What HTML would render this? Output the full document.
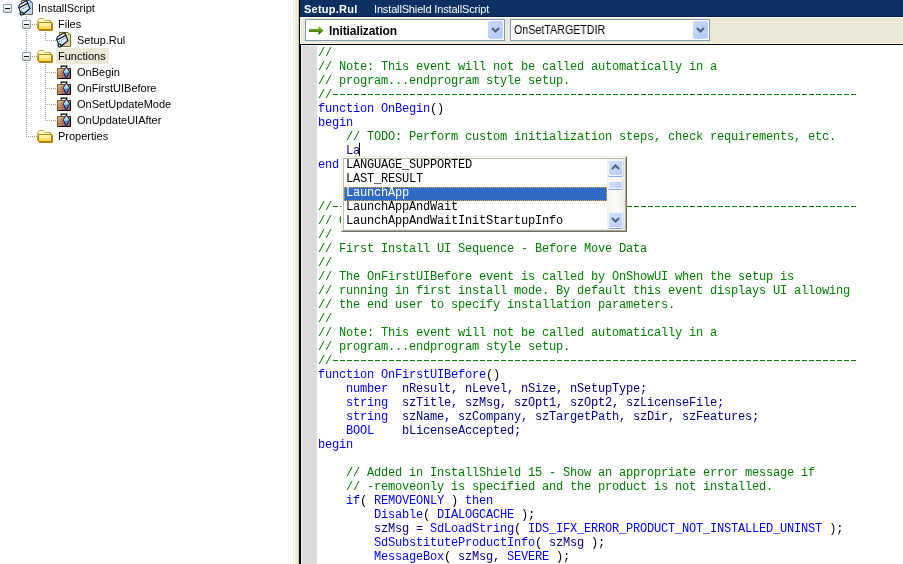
<!DOCTYPE html>
<html><head><meta charset="utf-8">
<style>
*{margin:0;padding:0;box-sizing:border-box}
html,body{width:903px;height:564px;overflow:hidden;background:#fff}
body{position:relative;font-family:"Liberation Sans",sans-serif}
#code,.li,.tl,#title span,.combo span{will-change:transform}
.abs{position:absolute}
/* tree */
.tl{position:absolute;font-size:11px;line-height:16px;color:#000;white-space:nowrap}
.vd{position:absolute;width:1px;background:repeating-linear-gradient(to bottom,#a5a39a 0 1px,transparent 1px 2px)}
.hd{position:absolute;height:1px;background:repeating-linear-gradient(to right,#a5a39a 0 1px,transparent 1px 2px)}
.exp{position:absolute;width:9px;height:9px;border:1px solid #7b9ebd;border-radius:1px;background:linear-gradient(#fff,#f4f2ea 50%,#d6d0bd)}
.exp:after{content:"";position:absolute;left:1px;top:3px;width:5px;height:1px;background:#000}
/* splitter */
/* title */
#title{left:300px;top:0;width:603px;height:17px;background:#0d3063;border-bottom:1px solid #08244e;color:#fff;font-size:11px;line-height:16px;white-space:nowrap}
#toolbar{left:300px;top:17px;width:603px;height:27px;background:#ece9d8;border-top:1px solid #fffcf2;border-left:1px solid #fbf9f0;border-bottom:1px solid #f8f6ec}
.combo{position:absolute;top:19px;width:205px;height:22px;border:1px solid #7f9db9;background:#fff;font-size:11px;white-space:nowrap}
.dbtn{position:absolute;width:15px;height:18px;border-radius:2px;background:linear-gradient(135deg,#cad8fd,#b3c9f7);border:1px solid #c3d3fd}
#editor{left:300px;top:44px;width:603px;height:520px;border-top:1px solid #000;border-left:1px solid #000;background:#fff}
#gutter{left:301px;top:45px;width:16px;height:519px;background:#dcdcdc;border-top:1px solid #f4f4f4;border-left:1px solid #f4f4f4}
#code{left:318px;top:46px;font-family:"Liberation Mono",monospace;font-size:12px;letter-spacing:-0.2px;line-height:14px;white-space:pre;color:#000}
.c{color:#008000}
.d{display:inline-block;vertical-align:top;width:525px;height:14px;background:linear-gradient(to right,transparent 1px,#008000 1px,#008000 6px,transparent 6px) 0 6px/7px 1px repeat-x}.k{color:#0000ff}.i{color:#000080}
/* popup */
.sb{position:absolute;width:15px;border:1px solid #f6f8ff;border-radius:2px;background:linear-gradient(135deg,#d4e0fe,#b8ccf8);box-shadow:0 1px 0 #86a4e4,1px 0 0 #c8d6f4}
#pop{left:341px;top:156px;width:286px;height:76px;border-top:1px solid #f1efe2;border-left:1px solid #f1efe2;border-right:1px solid #716f64;border-bottom:1px solid #716f64;background:#fff}
#pop2{left:342px;top:157px;width:284px;height:74px;border-top:1px solid #fff;border-left:1px solid #fff;border-right:1px solid #aca899;border-bottom:1px solid #aca899}
#list{left:343px;top:158px;width:282px;height:72px;border-top:1px solid #bdb9aa;border-left:1px solid #bdb9aa;border-right:1px solid #f1efe2;border-bottom:1px solid #f1efe2;background:#fff}
.li{position:absolute;left:346px;font-family:"Liberation Mono",monospace;font-size:12px;letter-spacing:-0.2px;line-height:14px;white-space:pre;color:#000}
</style></head><body>

<!-- left tree -->
<div class="abs" style="left:0;top:0;width:293px;height:564px;background:#fff"></div>

<div class="exp" style="left:3px;top:4px"></div>
<svg class="abs" style="left:18px;top:0" width="16" height="16" viewBox="0 0 16 16"><use href="#scrollB"/></svg>
<div class="tl" style="left:38px;top:0">InstallScript</div>

<div class="vd" style="left:26px;top:16px;height:4px"></div>
<div class="exp" style="left:22px;top:20px"></div>
<div class="hd" style="left:32px;top:24px;width:5px"></div>
<svg class="abs fold" style="left:37px;top:18px" width="16" height="13" viewBox="0 0 16 13"><use href="#folder"/></svg>
<div class="tl" style="left:58px;top:16px">Files</div>

<div class="vd" style="left:45px;top:32px;height:9px"></div>
<div class="hd" style="left:45px;top:40px;width:11px"></div>
<svg class="abs" style="left:56px;top:32px" width="16" height="16" viewBox="0 0 16 16"><use href="#scrollG"/></svg>
<div class="tl" style="left:77px;top:32px">Setup.Rul</div>

<div class="vd" style="left:26px;top:30px;height:22px"></div>
<div class="exp" style="left:22px;top:52px"></div>
<div class="hd" style="left:32px;top:56px;width:5px"></div>
<svg class="abs" style="left:37px;top:50px" width="16" height="13" viewBox="0 0 16 13"><use href="#folder"/></svg>
<div class="abs" style="left:56px;top:48px;width:53px;height:16px;background:#ece9d8"></div>
<div class="tl" style="left:58px;top:48px">Functions</div>

<div class="vd" style="left:26px;top:62px;height:75px"></div>
<div class="vd" style="left:45px;top:64px;height:57px"></div>

<!-- briefcase template -->
<svg width="0" height="0" style="position:absolute">
 <defs>
  <linearGradient id="fg" x1="0" y1="0" x2="0" y2="1"><stop offset="0" stop-color="#fffde0"/><stop offset="0.35" stop-color="#fff59a"/><stop offset="0.55" stop-color="#ffd8a0"/><stop offset="0.7" stop-color="#ffe050"/><stop offset="1" stop-color="#ffd030"/></linearGradient>
  <linearGradient id="sg" x1="0" y1="0" x2="1" y2="1"><stop offset="0" stop-color="#ffffff"/><stop offset="0.5" stop-color="#e8e8ff"/><stop offset="1" stop-color="#a0f0ff"/></linearGradient>
  <g id="folder">
   <path d="M0.5 10.5 V2.5 L2.5 0.5 H6 L8 2.5 H13.5 V4" fill="#fff8c0" stroke="#c4a848"/>
   <rect x="1.5" y="4.5" width="13" height="7" fill="url(#fg)" stroke="#b88400"/>
   <path d="M15.5 5 V12.5 H2" stroke="#b88400" fill="none"/>
  </g>
  <g id="scroll">
   <path d="M0.6 7.4 L1.6 4.6 L8.4 0.6 L9.8 3.2 L11.9 8.6 L5 14.2 L2.6 12.4 Z" fill="url(#sg)" stroke="#000" stroke-width="1.1" stroke-linejoin="round"/>
   <path d="M1.4 7.8 L9.8 3.2" stroke="#000" stroke-width="1.1"/>
   <path d="M3.2 9.6 L10.4 5.6" stroke="#2a9ad8" stroke-width="1" stroke-dasharray="1.2 0.8"/>
   <path d="M1.2 5.2 L1.4 7.4" stroke="#3a70e0" stroke-width="1.2"/>
   <circle cx="3.6" cy="13.6" r="1.6" fill="#90d8ff" stroke="#000" stroke-width="1.1"/>
  </g>
  <g id="scrollB">
   <path d="M3.5 0.5 H12 L14.5 3 V14.5 H3.5 Z" fill="#c4d8f8" stroke="#5c6656"/>
   <path d="M12 0.5 L14.5 3 H12Z" fill="#3a78e0"/>
   <use href="#scroll"/>
  </g>
  <g id="scrollG">
   <path d="M3.5 0.5 H12 L14.5 3 V14.5 H3.5 Z" fill="#d8e0a8" stroke="#6b7020"/>
   <rect x="4" y="8.5" width="10" height="5.5" fill="#e2cbb2"/>
   <path d="M12 0.5 L14.5 3 H12Z" fill="#a89040"/>
   <use href="#scroll"/>
  </g>
  <linearGradient id="bg" x1="0" y1="0" x2="1" y2="1"><stop offset="0" stop-color="#e0c8b0"/><stop offset="0.3" stop-color="#c89058"/><stop offset="0.65" stop-color="#b06868"/><stop offset="1" stop-color="#906040"/></linearGradient>
  <linearGradient id="dg" x1="0" y1="0" x2="0" y2="1"><stop offset="0" stop-color="#d0f8ff"/><stop offset="0.42" stop-color="#98e0ff"/><stop offset="0.55" stop-color="#4898f0"/><stop offset="1" stop-color="#2050c8"/></linearGradient>
  <g id="brief">
   <path d="M4.2 2.8 v-1.6 h5.6 v1.6" fill="none" stroke="#000" stroke-width="1.2"/>
   <rect x="0.5" y="3.5" width="13" height="10" fill="url(#bg)" stroke="#8a5848"/>
   <path d="M13.5 3.5 V13.5 H0.5" fill="none" stroke="#100800"/>
   <path d="M9.3 2.2 L12.4 6.8 L9.3 13.4 L6.2 6.8 Z" fill="url(#dg)" stroke="#0a1428" stroke-width="0.9"/>
  </g>
 </defs>
</svg>
<div class="hd" style="left:47px;top:72px;width:9px"></div>
<svg class="abs" style="left:57px;top:65px" width="14" height="14"><use href="#brief"/></svg>
<div class="tl" style="left:77px;top:64px">OnBegin</div>
<div class="hd" style="left:47px;top:88px;width:9px"></div>
<svg class="abs" style="left:57px;top:81px" width="14" height="14"><use href="#brief"/></svg>
<div class="tl" style="left:77px;top:80px">OnFirstUIBefore</div>
<div class="hd" style="left:47px;top:104px;width:9px"></div>
<svg class="abs" style="left:57px;top:97px" width="14" height="14"><use href="#brief"/></svg>
<div class="tl" style="left:77px;top:96px">OnSetUpdateMode</div>
<div class="hd" style="left:47px;top:120px;width:9px"></div>
<svg class="abs" style="left:57px;top:113px" width="14" height="14"><use href="#brief"/></svg>
<div class="tl" style="left:77px;top:112px">OnUpdateUIAfter</div>

<div class="hd" style="left:28px;top:136px;width:9px"></div>
<svg class="abs" style="left:37px;top:130px" width="16" height="13" viewBox="0 0 16 13"><use href="#folder"/></svg>
<div class="tl" style="left:58px;top:128px">Properties</div>

<!-- splitter -->
<div class="abs" style="left:293px;top:0;width:1px;height:564px;background:#f1efe2"></div>
<div class="abs" style="left:294px;top:0;width:1px;height:564px;background:#fdfcf8"></div>
<div class="abs" style="left:295px;top:0;width:3px;height:564px;background:#ece9d8"></div>
<div class="abs" style="left:298px;top:0;width:1px;height:564px;background:#cdc8b5"></div>
<div class="abs" style="left:299px;top:0;width:1px;height:564px;background:#000"></div>

<!-- title -->
<div id="title" class="abs"><span style="position:absolute;left:4px;top:1px;font-weight:bold;letter-spacing:0.25px">Setup.Rul</span><span style="position:absolute;left:74px;top:1px;letter-spacing:-0.15px">InstallShield InstallScript</span></div>

<!-- toolbar -->
<div id="toolbar" class="abs"></div>
<div class="combo" style="left:305px;width:200px">
 <svg class="abs" style="left:3px;top:6px" width="15" height="9" viewBox="0 0 15 9">
  <defs><linearGradient id="ag" x1="0" y1="0" x2="0" y2="1"><stop offset="0" stop-color="#70c020"/><stop offset="0.5" stop-color="#4a9808"/><stop offset="1" stop-color="#1a6000"/></linearGradient>
  <linearGradient id="ag2" x1="0" y1="0" x2="0" y2="1"><stop offset="0.33" stop-color="#68b818"/><stop offset="0.55" stop-color="#508c10"/><stop offset="0.78" stop-color="#1e6400"/></linearGradient></defs>
  <path d="M0 3 h9.5 v-3 l5 4.5 l-5 4.5 v-3 h-9.5z" fill="url(#ag2)"/>
 </svg>
 <span class="abs" style="left:23px;top:4px;font-weight:bold;font-size:12px;line-height:15px;letter-spacing:-0.1px">Initialization</span>
 <div class="dbtn" style="left:182px;top:1px"><svg class="abs" style="left:2px;top:5px" width="9" height="6" viewBox="0 0 9 6"><path d="M1 1 L4.5 4.5 L8 1" fill="none" stroke="#4d6185" stroke-width="2"/></svg></div>
</div>
<div class="combo" style="left:510px;width:200px">
 <span class="abs" style="left:3px;top:3px;font-size:12px;line-height:15px;transform:scaleX(0.89);transform-origin:0 0">OnSetTARGETDIR</span>
 <div class="dbtn" style="left:182px;top:1px"><svg class="abs" style="left:2px;top:5px" width="9" height="6" viewBox="0 0 9 6"><path d="M1 1 L4.5 4.5 L8 1" fill="none" stroke="#4d6185" stroke-width="2"/></svg></div>
</div>

<!-- editor -->
<div id="editor" class="abs"></div>
<div id="gutter" class="abs"></div>
<div id="code" class="abs"><span class="c">//</span>
<span class="c">// Note: This event will not be called automatically in a</span>
<span class="c">// program...endprogram style setup.</span>
<span class="c">//</span><span class="d"></span>
<span class="k">function</span> <span class="k">OnBegin</span><span class="p">()</span>
<span class="k">begin</span>
    <span class="c">// TODO: Perform custom initialization steps, check requirements, etc.</span>
    <span class="i">La</span>
<span class="k">end</span><span class="p">;</span>


<span class="c">//</span><span class="d"></span>
<span class="c">// OnFirstUIBefore</span>
<span class="c">//</span>
<span class="c">// First Install UI Sequence - Before Move Data</span>
<span class="c">//</span>
<span class="c">// The OnFirstUIBefore event is called by OnShowUI when the setup is</span>
<span class="c">// running in first install mode. By default this event displays UI allowing</span>
<span class="c">// the end user to specify installation parameters.</span>
<span class="c">//</span>
<span class="c">// Note: This event will not be called automatically in a</span>
<span class="c">// program...endprogram style setup.</span>
<span class="c">//</span><span class="d"></span>
<span class="k">function</span> <span class="k">OnFirstUIBefore</span><span class="p">()</span>
    <span class="k">number</span>  <span class="i">nResult, nLevel, nSize, nSetupType;</span>
    <span class="k">string</span>  <span class="i">szTitle, szMsg, szOpt1, szOpt2, szLicenseFile;</span>
    <span class="k">string</span>  <span class="i">szName, szCompany, szTargetPath, szDir, szFeatures;</span>
    <span class="k">BOOL</span>    <span class="i">bLicenseAccepted;</span>
<span class="k">begin</span>

    <span class="c">// Added in InstallShield 15 - Show an appropriate error message if</span>
    <span class="c">// -removeonly is specified and the product is not installed.</span>
    <span class="k">if</span><span class="p">( </span><span class="k">REMOVEONLY</span><span class="p"> ) </span><span class="k">then</span>
        <span class="k">Disable</span><span class="p">( </span><span class="k">DIALOGCACHE</span><span class="p"> );</span>
        <span class="i">szMsg = </span><span class="k">SdLoadString</span><span class="p">( </span><span class="k">IDS_IFX_ERROR_PRODUCT_NOT_INSTALLED_UNINST</span><span class="p"> );</span>
        <span class="k">SdSubstituteProductInfo</span><span class="p">( </span><span class="i">szMsg</span><span class="p"> );</span>
        <span class="k">MessageBox</span><span class="p">( </span><span class="i">szMsg</span><span class="p">, </span><span class="k">SEVERE</span><span class="p"> );</span>
        <span class="k">abort</span><span class="p">;</span></div>
<div class="abs" style="left:359px;top:143px;width:1px;height:13px;background:#000"></div>

<!-- popup -->
<div id="pop" class="abs"></div>
<div id="pop2" class="abs"></div>
<div id="list" class="abs"></div>
<div class="abs" style="left:344px;top:187px;width:263px;height:14px;background:#316ac5;outline:1px dotted #f0a030;outline-offset:-1px"></div>
<div class="li" style="top:158px">LANGUAGE_SUPPORTED</div>
<div class="li" style="top:172px">LAST_RESULT</div>
<div class="li" style="top:186px;color:#fff">LaunchApp</div>
<div class="li" style="top:200px">LaunchAppAndWait</div>
<div class="li" style="top:214px">LaunchAppAndWaitInitStartupInfo</div>
<!-- scrollbar -->
<div class="abs" style="left:607px;top:159px;width:17px;height:70px;background:linear-gradient(to right,#f3f1ea,#fdfdfa 60%,#eeede5)"></div>
<div class="sb" style="left:608px;top:160px;height:16px"><svg class="abs" style="left:2px;top:3px" width="9" height="6" viewBox="0 0 9 6"><path d="M1 5 L4.5 1.5 L8 5" fill="none" stroke="#4d6185" stroke-width="2"/></svg></div>
<div class="sb" style="left:608px;top:181px;height:8px"></div>
<div class="sb" style="left:608px;top:212px;height:16px"><svg class="abs" style="left:2px;top:4px" width="9" height="6" viewBox="0 0 9 6"><path d="M1 1 L4.5 4.5 L8 1" fill="none" stroke="#4d6185" stroke-width="2"/></svg></div>

</body></html>
